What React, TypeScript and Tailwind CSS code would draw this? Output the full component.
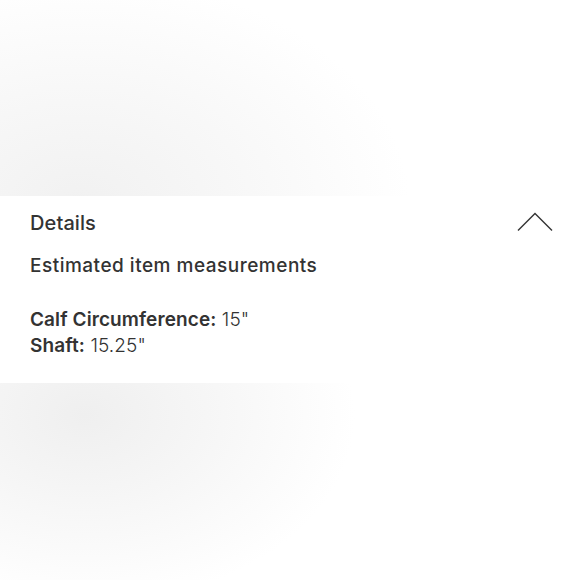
import React from "react";

export default function App() {
  return (
    <div className="w-[580px] h-[580px] flex flex-col bg-white overflow-hidden" style={{ fontFamily: "Inter, 'Noto Sans', sans-serif" }}>
      <div className="h-[196px] bg-[radial-gradient(ellipse_330px_230px_at_80px_205px,#f1f1f1_0%,#f7f7f7_45%,#ffffff_100%)]" />
      <div className="h-[187px] bg-white pl-[30px] pr-[27px] pt-[13px] text-[#333333]">
        <div className="flex items-center justify-between h-[28px]">
          <span className="text-[20px] leading-[28px] font-medium tracking-[0.1px]">Details</span>
          <svg width="36" height="20" viewBox="0 0 36 20" className="mt-[-2px]">
            <path d="M1 18.5 L18 1.5 L35 18.5" fill="none" stroke="#333333" strokeWidth="1.4" />
          </svg>
        </div>
        <div className="mt-[16px] text-[19px] leading-[26px] font-medium tracking-[0.5px]">Estimated item measurements</div>
        <div className="mt-[28px] text-[19px] leading-[26px] tracking-[0.1px]">
          <div>
            <span className="font-semibold">Calf Circumference:</span> <span className="font-light">15"</span>
          </div>
          <div>
            <span className="font-semibold">Shaft:</span> <span className="font-light">15.25"</span>
          </div>
        </div>
      </div>
      <div className="flex-1 bg-[radial-gradient(ellipse_270px_190px_at_85px_415px,#efefef_0%,#f6f6f6_45%,#ffffff_100%)] bg-[length:580px_580px] bg-[position:0_-383px]" />
    </div>
  );
}
